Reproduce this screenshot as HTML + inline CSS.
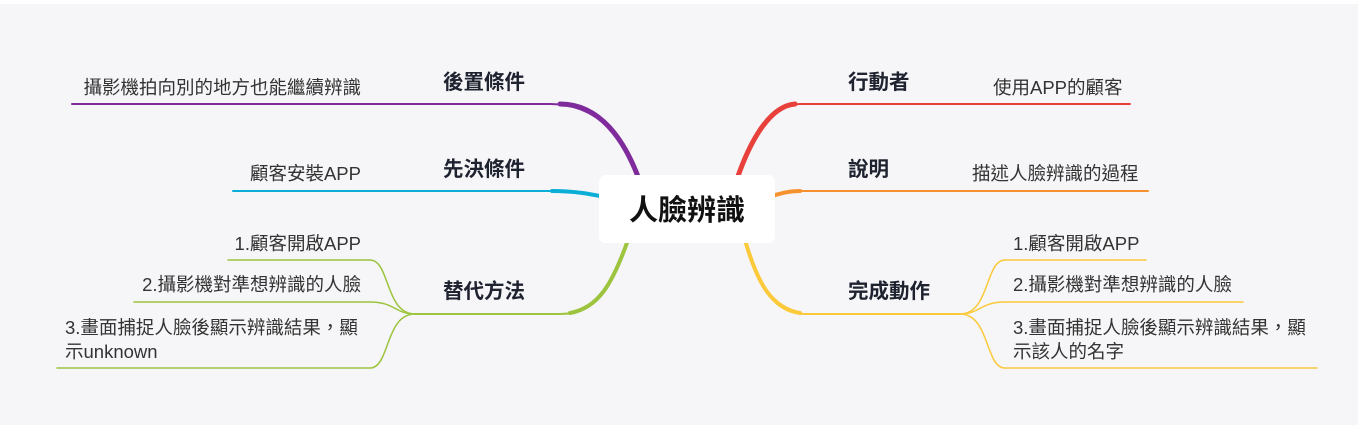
<!DOCTYPE html>
<html><head><meta charset="utf-8"><style>
body{margin:0;width:1358px;height:425px;background:#f6f6f8;overflow:hidden;font-family:"Liberation Sans","Noto Sans CJK TC",sans-serif;}
</style></head><body>
<svg width="1358" height="425" xmlns="http://www.w3.org/2000/svg" style="position:absolute;left:0;top:0">
<rect x="0" y="0" width="1358" height="4" fill="#fff"/>
<g fill="none" stroke-linecap="round">
<path d="M72 104 H550 C600 104 625 140 640 182" stroke="#7f2b9c" stroke-width="2"/>
<path d="M560 104 C600 104 625 140 640 182" stroke="#7f2b9c" stroke-width="5"/>
<path d="M233 191 H552 C575 191 590 194 605 197" stroke="#0aaed6" stroke-width="2"/>
<path d="M552 191 C575 191 590 194 605 197" stroke="#0aaed6" stroke-width="4"/>
<path d="M628 240 C610 290 595 314 560 314 H415" stroke="#9dc43e" stroke-width="2"/>
<path d="M628 240 C612 285 598 308 570 313" stroke="#9dc43e" stroke-width="4"/>
<path d="M415 314 C385 314 390 260 370 260 H228" stroke="#9dc43e" stroke-width="1.5"/>
<path d="M415 314 C395 314 395 302 370 302 H134" stroke="#9dc43e" stroke-width="1.5"/>
<path d="M415 314 C385 314 390 368 370 368 H57" stroke="#9dc43e" stroke-width="1.5"/>
<path d="M736 182 C750 140 770 104 800 104 H1130" stroke="#e8413b" stroke-width="2"/>
<path d="M736 182 C750 140 770 106 795 104" stroke="#e8413b" stroke-width="5"/>
<path d="M770 197 C780 193 790 191 800 191 H1148" stroke="#f5922f" stroke-width="2"/>
<path d="M770 197 C780 193 790 191 800 191" stroke="#f5922f" stroke-width="4"/>
<path d="M745 240 C760 290 775 314 805 314 H960" stroke="#fbc93a" stroke-width="2"/>
<path d="M745 240 C758 285 772 308 800 313" stroke="#fbc93a" stroke-width="4"/>
<path d="M960 314 C990 314 985 260 1005 260 H1146" stroke="#fbc93a" stroke-width="1.5"/>
<path d="M960 314 C980 314 980 302 1005 302 H1243" stroke="#fbc93a" stroke-width="1.5"/>
<path d="M960 314 C990 314 985 368 1005 368 H1317" stroke="#fbc93a" stroke-width="1.5"/>
</g>
<rect x="599" y="175" width="176" height="68" rx="7" fill="#fff"/>
<text x="687" y="220" text-anchor="middle" font-size="29" font-weight="bold" fill="#111" font-family="Liberation Sans,Noto Sans CJK TC,sans-serif">人臉辨識</text>
<g font-size="20.5" font-weight="bold" fill="#1f2330" font-family="Liberation Sans,Noto Sans CJK TC,sans-serif">
<text x="443" y="89">後置條件</text>
<text x="443" y="176">先決條件</text>
<text x="443" y="298">替代方法</text>
<text x="848" y="89">行動者</text>
<text x="848" y="176">說明</text>
<text x="848" y="298">完成動作</text>
</g>
<g font-size="18.5" fill="#333" font-family="Liberation Sans,Noto Sans CJK TC,sans-serif">
<text x="361" y="94" text-anchor="end">攝影機拍向別的地方也能繼續辨識</text>
<text x="361" y="180" text-anchor="end">顧客安裝APP</text>
<text x="361" y="250" text-anchor="end">1.顧客開啟APP</text>
<text x="361" y="291" text-anchor="end">2.攝影機對準想辨識的人臉</text>
<text x="65" y="334">3.畫面捕捉人臉後顯示辨識結果，顯</text>
<text x="65" y="358">示unknown</text>
<text x="993" y="94">使用APP的顧客</text>
<text x="972" y="180">描述人臉辨識的過程</text>
<text x="1013" y="250">1.顧客開啟APP</text>
<text x="1013" y="291">2.攝影機對準想辨識的人臉</text>
<text x="1013" y="334">3.畫面捕捉人臉後顯示辨識結果，顯</text>
<text x="1013" y="358">示該人的名字</text>
</g>
</svg>
</body></html>
